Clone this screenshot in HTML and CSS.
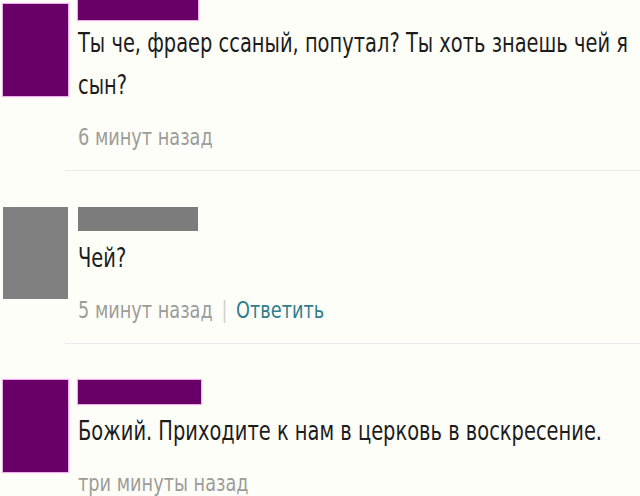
FILE: index.html
```html
<!DOCTYPE html>
<html lang="ru">
  <head>
    <meta charset="UTF-8" />
    <meta name="viewport" content="width=device-width, initial-scale=1.0" />
    <title>Комментарии</title>
    <link rel="stylesheet" href="styles.css">
  </head>

  <body>
    <div class="lenta">
      <!-- Первый комментарий -->
      <div class="comment comment-first">
        <div class="avatar avatar-purple avatar-low"></div>
        <div class="comment-body">
          <div class="name name-purple name-tall"></div>
          <p class="text text-close">Ты че, фраер ссаный, попутал? Ты хоть знаешь чей я сын?</p>
          <div class="meta">6 минут назад</div>
        </div>
      </div>
      <div class="divider"></div>

      <!-- Второй комментарий -->
      <div class="comment">
        <div class="avatar avatar-gray"></div>
        <div class="comment-body">
          <div class="name name-gray"></div>
          <p class="text">Чей?</p>
          <div class="meta">5 минут назад <span class="sep">|</span> <a class="reply" href="#">Ответить</a></div>
        </div>
      </div>
      <div class="divider"></div>

      <!-- Третий комментарий -->
      <div class="comment">
        <div class="avatar avatar-purple"></div>
        <div class="comment-body">
          <div class="name name-purple name-wide"></div>
          <p class="text">Божий. Приходите к нам в церковь в воскресение.</p>
          <div class="meta">три минуты назад</div>
        </div>
      </div>
    </div>
  </body>
</html>
```

FILE: styles.css
```css
/* Общий фон страницы */
body {
  margin: 0;
  padding: 0;
  background-color: #fefef8;
  font-family: "DejaVu Sans", Verdana, sans-serif;
  color: #1c1c1c;
  overflow: hidden;
}

.lenta {
  width: 640px;
}

.comment {
  display: flex;
  gap: 10px;
  padding-left: 3px;
  padding-bottom: 18px;
}

.comment-first {
  margin-top: -8px;
}

/* Закрашенные аватарки */
.avatar {
  width: 65px;
  height: 92px;
  flex-shrink: 0;
}

.avatar-low {
  margin-top: 12px;
}

.avatar-purple {
  background-color: #690068;
  box-shadow: 0 0 1px 1px #f0b0ee;
}

.avatar-gray {
  background-color: #808080;
}

.comment-body {
  flex: 1;
  min-width: 0;
}

/* Закрашенные имена */
.name {
  width: 120px;
  height: 24px;
}

.name-tall {
  height: 28px;
}

.name-wide {
  width: 123px;
}

.name-purple {
  background-color: #690068;
  box-shadow: 0 0 1px 1px #f0b0ee;
}

.name-gray {
  background-color: #7c7c7c;
}

/* Текст на скриншоте сжат по горизонтали */
.text {
  margin: 6px 0 0;
  width: 800px;
  font-size: 27px;
  line-height: 42px;
  transform: scaleX(0.72);
  transform-origin: left top;
}

.text-close {
  margin-top: 2px;
}

.meta {
  margin-top: 16px;
  width: 400px;
  font-size: 23px;
  line-height: 30px;
  color: #9c9c98;
  transform: scaleX(0.77);
  transform-origin: left top;
}

.sep {
  color: #d0d0cc;
  margin: 0 4px;
}

.reply {
  color: #2f7e8c;
  text-decoration: none;
}

/* Разделитель между комментариями */
.divider {
  margin-left: 65px;
  margin-bottom: 36px;
  height: 1px;
  background-color: #f2e6ee;
}
```
